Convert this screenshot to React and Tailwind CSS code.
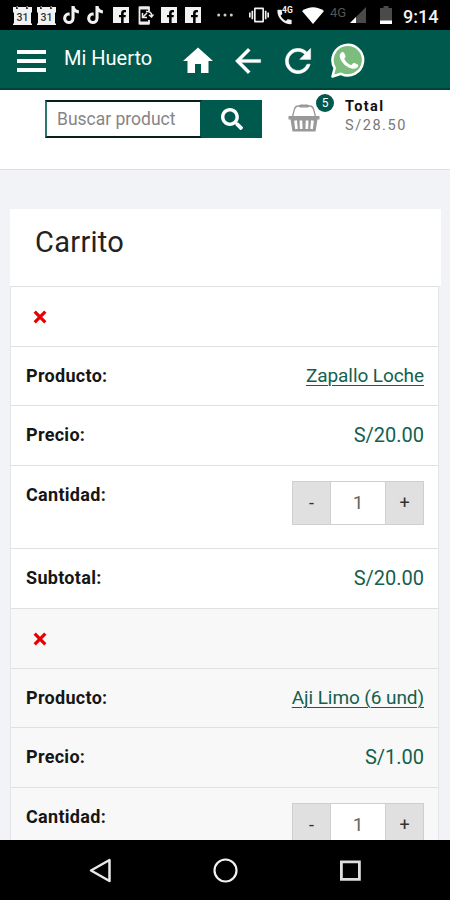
import { useState } from "react";
import { FaTiktok, FaFacebookF, FaSearch } from "react-icons/fa";
import { MdHome, MdVibration, MdCall } from "react-icons/md";

const cart = [
  { id: 1, name: "Zapallo Loche", price: "S/20.00", subtotal: "S/20.00", qty: 1 },
  { id: 2, name: "Aji Limo (6 und)", price: "S/1.00", qty: 1 },
];

function CalendarIcon({ className }) {
  return (
    <svg className={className} width="19" height="19" viewBox="0 0 19 19">
      <path fill="#f2f2f2" d="M0 1h3v2h2V1h8v2h2V1h4v5l-1 1v10l1 1v1H0v-1l1-1V7L0 6z" />
      <path fill="#888" d="M3.500 0h1.500v2.500H3.500zM13.500 0H15v2.500h-1.500z" />
      <text x="9.5" y="14.500" textAnchor="middle" fontSize="10.500" fontWeight="500" fontFamily="Roboto, sans-serif" fill="#333">
        31
      </text>
    </svg>
  );
}

function FacebookIcon({ className }) {
  return (
    <span className={`flex h-4 w-4 items-end justify-end overflow-hidden bg-[#f2f2f2] pr-[2px] ${className}`}>
      <FaFacebookF className="h-[13px] w-[9px] text-black" />
    </span>
  );
}

function PhoneSyncIcon({ className }) {
  return (
    <svg className={className} width="16" height="19" viewBox="0 0 16 19" fill="none" stroke="#eee">
      <path strokeWidth="1.8" d="M11 5V1.5H1.5v16H11V14" />
      <path strokeWidth="3" d="M1.5 2h9.500M1.500 17H11" />
      <path strokeWidth="1.500" d="M4.500 7v4.500H9M4.500 11.500L9 7M8 5.500c4-.5 6 1.500 5.500 5M11 9l2.500 2 2-2.500" />
    </svg>
  );
}

function StatusBar() {
  return (
    <div className="flex h-[30px] shrink-0 items-center bg-black text-[#f2f2f2]">
      <CalendarIcon className="ml-[13px]" />
      <CalendarIcon className="ml-[5px]" />
      <FaTiktok className="ml-[7px] h-[18px] w-4" />
      <FaTiktok className="ml-2 h-[18px] w-4" />
      <FacebookIcon className="ml-[10px]" />
      <PhoneSyncIcon className="ml-[9px]" />
      <FacebookIcon className="ml-[7px]" />
      <FacebookIcon className="ml-2" />
      <svg className="ml-4" width="16" height="4" viewBox="0 0 16 4" fill="#ccc">
        <circle cx="1.700" cy="2" r="1.500" />
        <circle cx="8" cy="2" r="1.500" />
        <circle cx="14.300" cy="2" r="1.500" />
      </svg>
      <MdVibration className="ml-[16px] h-5 w-5" />
      <span className="relative ml-[7px] h-[19px] w-[19px]">
        <MdCall className="mt-px -ml-px h-[20px] w-[19px]" />
        <span className="absolute -top-px left-[6px] text-[8.500px] leading-[10px] font-bold">4G</span>
      </span>
      <svg className="ml-[7px]" width="22" height="17" viewBox="0 0 22 17">
        <path fill="#fff" d="M0 4Q11-3.500 22 4L11 17z" />
      </svg>
      <span className="mt-[-4px] ml-[6px] w-[18px] text-[13px] leading-3 text-[#555]">4G</span>
      <svg className="ml-[2px]" width="16" height="16" viewBox="0 0 16 16">
        <path fill="#4a4a4a" d="M16 0v16H0z" />
        <path fill="#fff" d="M6 10v6H0z" />
      </svg>
      <svg className="ml-[14px]" width="12" height="18" viewBox="0 0 12 18">
        <path fill="#4a4a4a" d="M3.500 0h5v2H12v16H0V2h3.500z" />
        <path fill="#fff" d="M0 14.500h12V18H0z" />
      </svg>
      <span className="mt-[3px] ml-[11px] text-[18px] leading-5 font-medium">9:14</span>
    </div>
  );
}

function AppBar() {
  return (
    <header className="flex h-[60px] shrink-0 items-center border-b-2 border-[#014239] bg-[#00594d] text-white">
      <button className="mt-[3px] ml-[17px] flex w-[29px] flex-col gap-[5px]" aria-label="Menu">
        <span className="h-1 w-full bg-white" />
        <span className="h-1 w-full bg-white" />
        <span className="h-1 w-full bg-white" />
      </button>
      <h1 className="-mt-[2px] ml-[18px] w-[119px] text-[20px] leading-6">Mi Huerto</h1>
      <MdHome className="mt-[3px] -ml-[3px] h-[36px] w-[36px]" />
      <svg className="mt-[3px] ml-[13px] h-[38px] w-[38px]" viewBox="0 0 24 24" fill="currentColor" stroke="currentColor" strokeWidth="0.25">
        <path d="M20 11H7.830l5.590-5.590L12 4l-8 8 8 8 1.410-1.410L7.830 13H20z" />
      </svg>
      <svg className="mt-[3px] ml-[12px] h-[38px] w-[38px]" viewBox="0 0 24 24" fill="currentColor" stroke="currentColor" strokeWidth="0.25">
        <path d="M17.650 6.350A7.958 7.958 0 0 0 12 4a8 8 0 1 0 7.730 10h-2.080A6 6 0 1 1 12 6c1.660 0 3.140.690 4.220 1.780L13 11h7V4z" />
      </svg>
      <svg className="mt-[3px] ml-[14px]" width="35" height="35" viewBox="0 0 35 35">
        <path
          fill="#7cbd7d"
          stroke="#fff"
          strokeWidth="2.500"
          strokeLinejoin="round"
          d="M1.500 33.500l2.200-8.500A15.300 15.300 0 1 1 10 30.800z"
        />
        <path
          fill="#fff"
          d="M10.300 9.600c.8-.9 2.300-.8 2.800.2l1.400 3.200c.3.900-.3 1.500-1.300 2.700 1.700 3.300 4 5.300 7.100 6.600l1.800-2c.5-.5.900-.5 1.500-.2l3 1.500c.7.300.8.700.6 1.500-.5 1.700-2.400 2.700-4.200 2.700-3 0-7.800-2.200-10.600-5.400-2.400-2.800-3.700-5.300-3.700-7.500 0-1.300.8-2.400 1.600-3.300z"
        />
      </svg>
    </header>
  );
}

function BasketIcon() {
  return (
    <svg width="32" height="28" viewBox="0 0 32 28" fill="none">
      <path stroke="#999" strokeWidth="1.300" d="M4.500 12.500L6.500 5Q7.500 2 10 2h12Q24.500 2 25.500 5l2 7.500" />
      <path stroke="#999" strokeWidth="3" strokeLinecap="round" d="M12.500 2h7" />
      <path fill="#999" d="M.5 12h31v3.500h-2L27.500 27.500h-23L2.500 15.500h-2z" />
      <path stroke="#fff" strokeWidth="2.700" d="M7.500 16.500l1 8.500M12.900 16.500l.3 8.500M19.100 16.500l-.3 8.500M24.500 16.500l-1 8.500" />
    </svg>
  );
}

function SearchArea() {
  return (
    <div className="flex h-[80px] shrink-0 items-start border-b border-[#dedfe1] bg-white pt-[10px] pl-[45px]">
      <div className="flex h-[38px] w-[217px]">
        <input
          type="text"
          placeholder="Buscar product"
          className="w-[157px] border-2 border-y-[#08201c] border-r-[#00594d] border-l-[#2b776c] bg-white px-[10px] text-[17.500px] outline-none placeholder:text-[#858585]"
        />
        <button className="flex w-[60px] items-center justify-center bg-[#00594d] text-white" aria-label="Buscar">
          <FaSearch className="h-[22px] w-[22px]" />
        </button>
      </div>
      <div className="relative mt-[4px] ml-[26px]">
        <BasketIcon />
        <span className="absolute -top-[10px] left-[28px] flex h-[18px] w-[18px] items-center justify-center rounded-full bg-[#00594d] text-[12px] leading-none text-white">
          5
        </span>
      </div>
      <div className="-mt-[3px] ml-[25px] text-[14.500px] leading-[19px]">
        <p className="font-bold tracking-[1.400px] text-[#111]">Total</p>
        <p className="tracking-[1.550px] text-[#777]">S/28.50</p>
      </div>
    </div>
  );
}

function Row({ label, className = "h-[60px]", children }) {
  return (
    <div className={`flex items-start justify-between border-t border-[#dfe0e2] pt-[17px] pr-[14px] pl-[15px] leading-6 ${className}`}>
      <span className="text-[18px] font-bold tracking-[0.300px] text-[#161616]">{label}</span>
      {children}
    </div>
  );
}

function Quantity({ initial }) {
  const [qty, setQty] = useState(initial);
  return (
    <div className="-mt-[2px] flex h-[44px] w-[132px] border border-[#cfcfcf] text-[18px] text-[#333]">
      <button className="w-[38px] border-r border-[#d0d0d0] bg-[#e0e0e0]" onClick={() => setQty(Math.max(0, qty - 1))}>
        -
      </button>
      <span className="flex flex-1 items-center justify-center bg-white text-[19px] text-[#666]">{qty}</span>
      <button className="w-[38px] border-l border-[#d0d0d0] bg-[#e0e0e0]" onClick={() => setQty(qty + 1)}>
        +
      </button>
    </div>
  );
}

function CartItem({ item, shaded }) {
  return (
    <div className={shaded ? "bg-[#f8f8f8]" : "bg-white"}>
      <div className="h-[60px] border-t border-[#dfe0e2] pt-[23px] pl-[22px]">
        <svg width="14" height="14" viewBox="0 0 14 14" stroke="#e80000" strokeWidth="3.200">
          <path d="M1.700 1.700l10.600 10.600M12.300 1.700L1.700 12.300" />
        </svg>
      </div>
      <Row label="Producto:" className="h-[59px]">
        <a
          href="#"
          className="text-[19px] tracking-[-0.080px] text-[#145f4e] underline decoration-1 underline-offset-[3px]"
        >
          {item.name}
        </a>
      </Row>
      <Row label="Precio:">
        <span className="text-[20px] text-[#145f4e]">{item.price}</span>
      </Row>
      <Row label="Cantidad:" className="h-[83px]">
        <Quantity initial={item.qty} />
      </Row>
      {item.subtotal && (
        <Row label="Subtotal:">
          <span className="text-[20px] text-[#145f4e]">{item.subtotal}</span>
        </Row>
      )}
    </div>
  );
}

function NavBar() {
  return (
    <nav className="flex h-[60px] shrink-0 items-center bg-black">
      <svg className="ml-[88px]" width="23" height="26" viewBox="0 0 23 26" fill="none" stroke="#e8e8e8" strokeWidth="2.500">
        <path strokeLinejoin="round" d="M3 13.500L21.500 3v21z" />
      </svg>
      <svg className="ml-[102px]" width="26" height="26" viewBox="0 0 26 26" fill="none" stroke="#f2f2f2" strokeWidth="2.200">
        <circle cx="12.500" cy="13.500" r="11" />
      </svg>
      <svg className="ml-[100px]" width="23" height="22" viewBox="0 0 23 22" fill="none" stroke="#dedede" strokeWidth="2.800">
        <path d="M2.400 2.900h18v17.500h-18z" />
      </svg>
    </nav>
  );
}

export default function App() {
  return (
    <div className="flex h-[900px] w-[450px] flex-col overflow-hidden bg-[#f1f3f7] font-[Roboto,sans-serif]">
      <StatusBar />
      <AppBar />
      <SearchArea />
      <main className="min-h-0 flex-1 overflow-hidden pt-[39px]">
        <h2 className="mr-[9px] ml-[10px] h-[77px] bg-white pt-[15px] pl-[25px] text-[29px] leading-9 tracking-[0.300px] text-[#222]">
          Carrito
        </h2>
        <div className="mr-[11px] ml-[10px] border-x border-[#e3e5e8]">
          {cart.map((item, i) => (
            <CartItem key={item.id} item={item} shaded={i % 2 === 1} />
          ))}
        </div>
      </main>
      <NavBar />
    </div>
  );
}
